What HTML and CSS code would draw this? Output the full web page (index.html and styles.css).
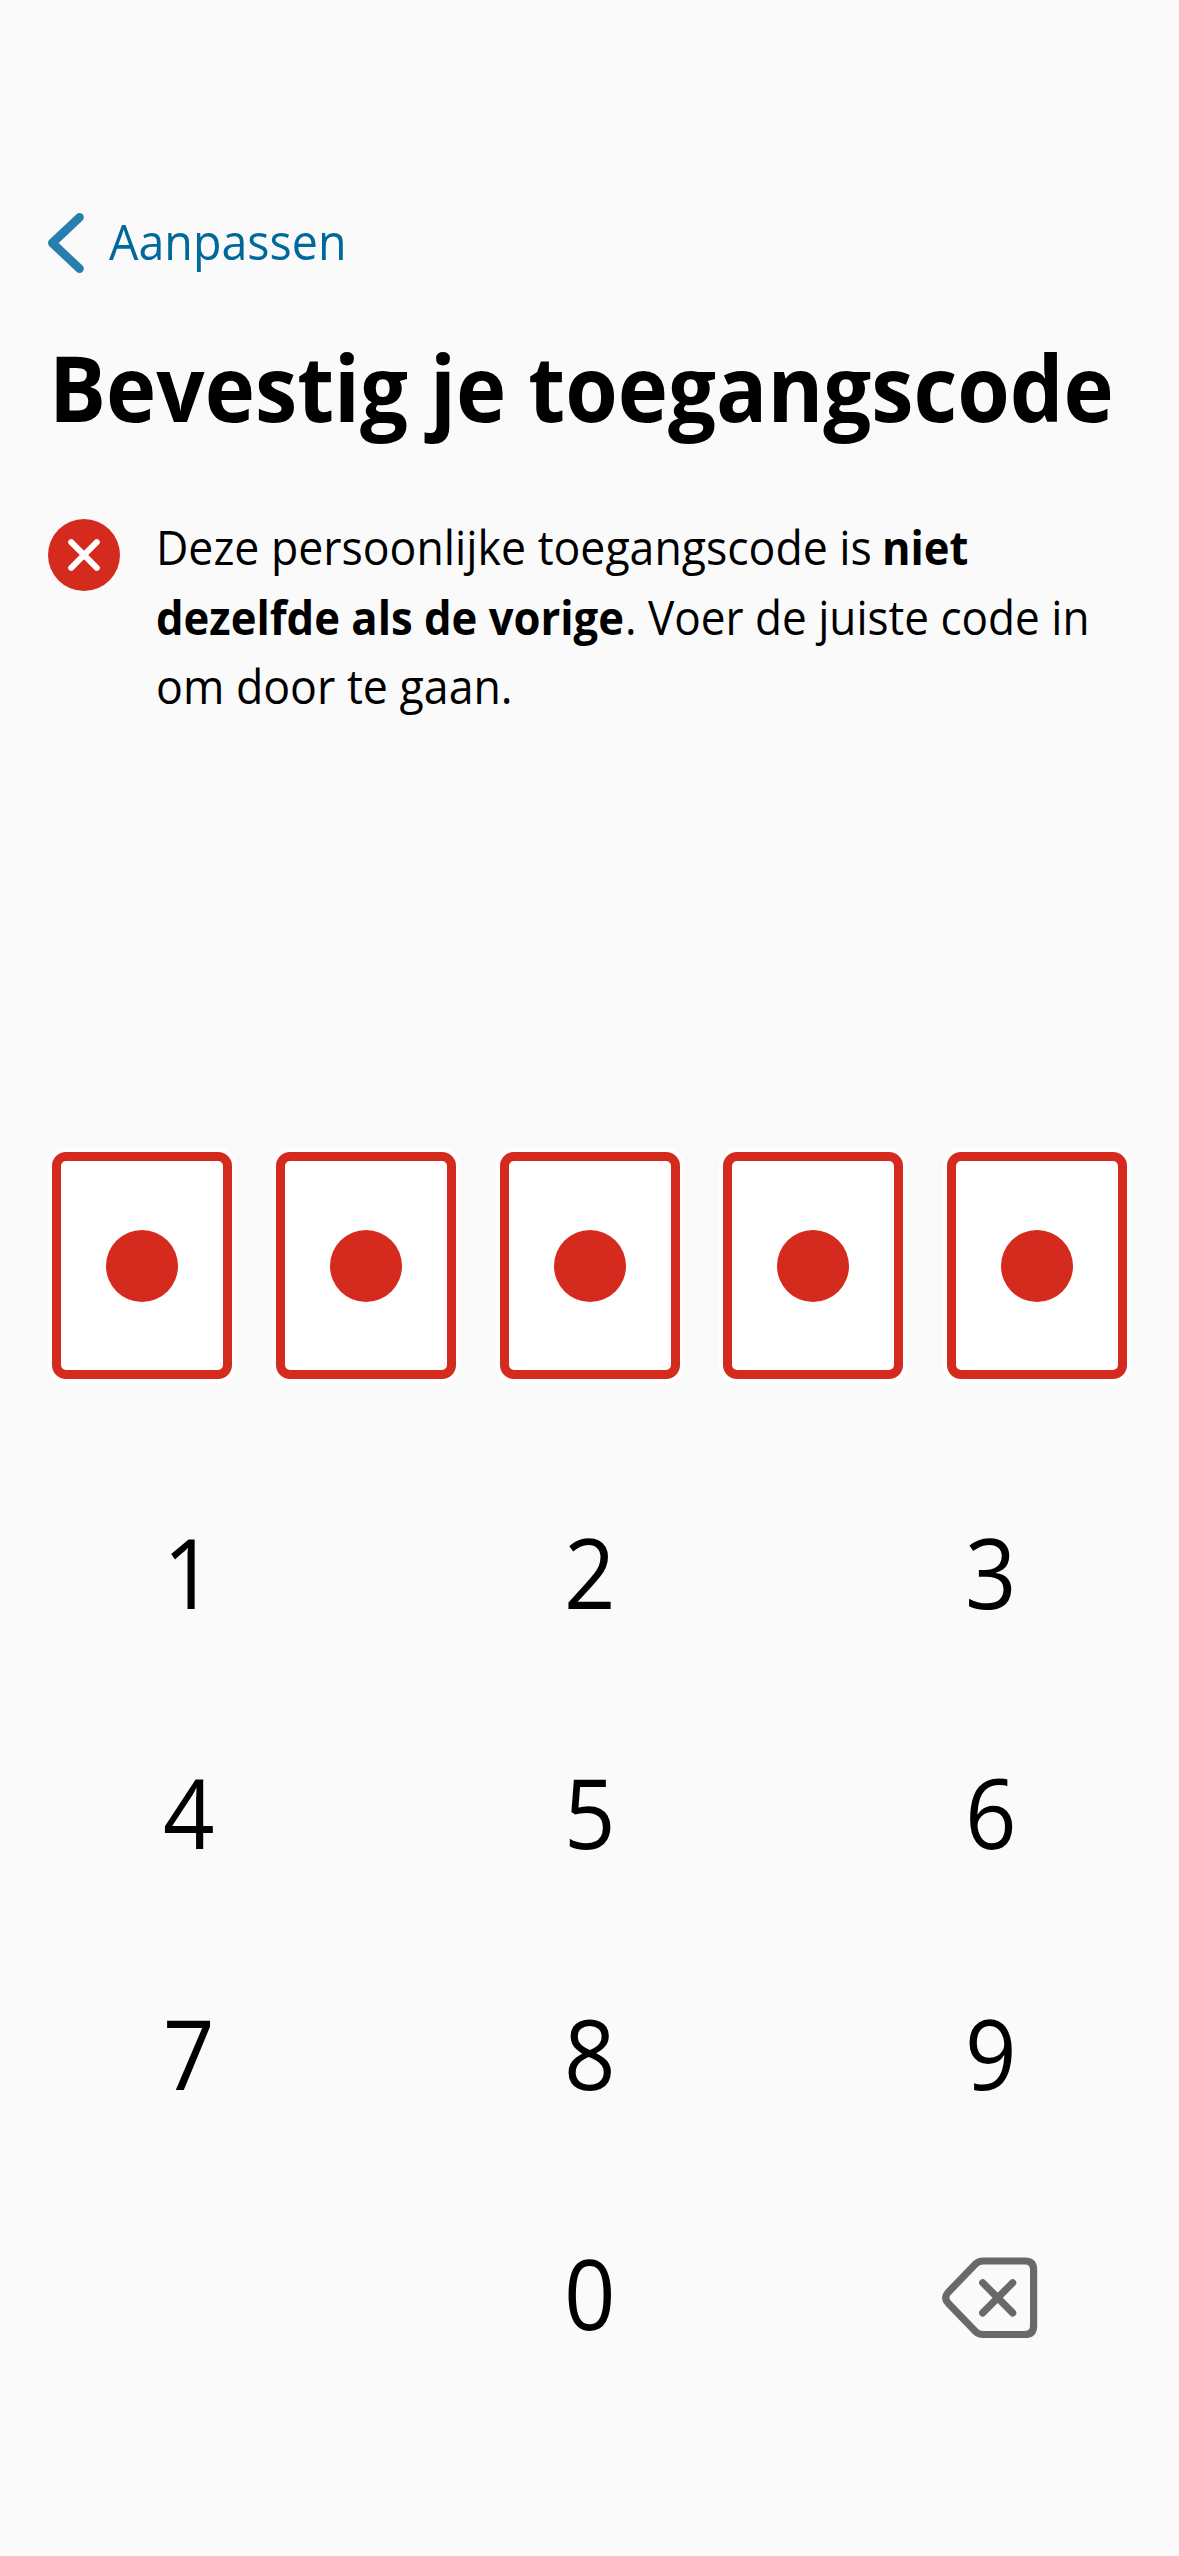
FILE: index.html
```html
<!DOCTYPE html>
<html lang="nl">
<head>
<meta charset="utf-8">
<title>Bevestig je toegangscode</title>
<link rel="stylesheet" href="styles.css">
</head>
<body>
<main class="screen">
  <a class="back">
    <svg class="back-icon" width="38" height="62" viewBox="0 0 38 62" fill="none" stroke="currentColor" stroke-width="8.6" stroke-linecap="round" stroke-linejoin="round"><path d="M32.5 5.3 5.3 31l27.2 25.7"/></svg>
    <span class="back-label">Aanpassen</span>
  </a>
  <h1 class="title">Bevestig je toegangscode</h1>
  <section class="alert">
    <svg class="alert-icon" width="72" height="72" viewBox="0 0 72 72"><circle cx="36" cy="36" r="36" fill="#d52b1e"/><path d="M23.200 23.200 48.800 48.800M48.800 23.200 23.200 48.800" stroke="#fff" stroke-width="6" stroke-linecap="round"/></svg>
    <div class="message">
      <div class="line"><span class="run r1">Deze persoonlijke toegangscode is</span> <b class="run r2">niet</b></div>
      <div class="line"><b class="run r3">dezelfde als de vorige</b><span class="run r4">. Voer de juiste code in</span></div>
      <div class="line"><span class="run r5">om door te gaan.</span></div>
    </div>
  </section>
  <div class="code">
    <div class="cell"><i class="dot"></i></div>
    <div class="cell"><i class="dot"></i></div>
    <div class="cell"><i class="dot"></i></div>
    <div class="cell"><i class="dot"></i></div>
    <div class="cell"><i class="dot"></i></div>
  </div>
  <div class="keypad">
    <div class="key"><span>1</span></div><div class="key"><span>2</span></div><div class="key"><span>3</span></div>
    <div class="key"><span>4</span></div><div class="key"><span>5</span></div><div class="key"><span>6</span></div>
    <div class="key"><span>7</span></div><div class="key"><span>8</span></div><div class="key"><span>9</span></div>
    <div class="key"></div><div class="key"><span>0</span></div>
    <div class="key"><svg class="erase" width="96" height="82" viewBox="0 0 96 82" fill="none" stroke="#696969" stroke-width="7.2" stroke-linecap="round" stroke-linejoin="round"><path d="M41 4H83Q91.6 4 91.6 12.5V69Q91.6 77.5 83 77.5H41Q36.500 77.5 33.500 74.500L6 46Q1.500 40.700 6 35.500L33.500 7Q36.500 4 41 4Z"/><path d="M40.700 25.700 70.700 55.900M70.700 25.700 40.700 55.900"/></svg></div>
  </div>
</main>
</body>
</html>
```
FILE: styles.css
```css
* { box-sizing: border-box; }
body { margin: 0; background: #fafafa; color: #000; font-family: "Open Sans", "Noto Sans", sans-serif; }
.screen { width: 1179px; height: 2556px; padding-top: 211px; overflow: hidden; display: flex; flex-direction: column; }
.back { display: flex; align-items: center; height: 60px; margin-left: 47px; gap: 24px; color: #01689b; }
.back-icon { color: #277fae; margin-top: 4px; }
.back-label { font-size: 50px; line-height: 60px; transform: scaleX(.932); transform-origin: 0 50%; }
.title { margin: 66px 0 0 49px; font-size: 91px; line-height: 100px; font-weight: 700; white-space: nowrap; transform: scaleX(.934); transform-origin: 0 50%; }
.alert { display: flex; margin: 75px 0 0 48px; height: 210px; }
.alert-icon { flex: none; margin-top: 7px; }
.message { margin-left: 36px; font-size: 47px; }
.line { display: flex; height: 69.700px; line-height: 70px; white-space: nowrap; }
.run { flex: none; transform-origin: 0 50%; }
.r1 { width: 726px; transform: scaleX(.949); }
.r2 { transform: scaleX(.925); }
.r3 { width: 469px; transform: scaleX(.928); }
.r4 { transform: scaleX(.938); }
.r5 { transform: scaleX(.951); }
.code { display: flex; justify-content: space-between; margin: 430px 52px 0; height: 227px; }
.cell { display: flex; align-items: center; justify-content: center; width: 180px; border: 9px solid #d52b1e; border-radius: 14px; background: #fff; box-shadow: 0 0 0 4px #fff; }
.dot { width: 72px; height: 72px; margin-top: 1px; border-radius: 50%; background: #d52b1e; }
.keypad { display: grid; grid-template-columns: 377px 425px 377px; grid-auto-rows: 240.300px; margin-top: 72px; font-size: 97px; line-height: 240px; }
.key { display: flex; align-items: center; justify-content: center; }
.key span { transform: scaleX(.93); }
.erase { margin: 11px 1px 0 0; }
```
